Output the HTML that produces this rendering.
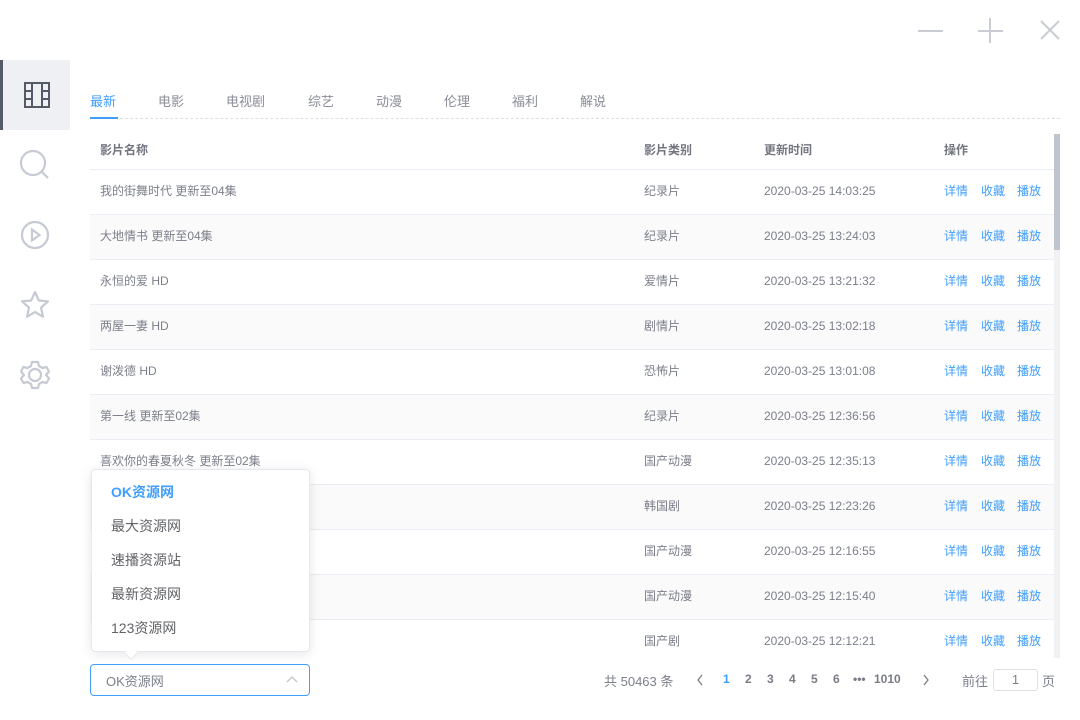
<!DOCTYPE html>
<html><head><meta charset="utf-8"><style>
*{margin:0;padding:0;box-sizing:border-box}
body{width:1080px;height:720px;background:#fff;font-family:"Liberation Sans","Noto Sans CJK SC",sans-serif;position:relative;overflow:hidden;color:#7b7f8a;font-size:12px}
.abs{position:absolute}
.tabs span{position:absolute;top:91px;font-size:13px;color:#8a8d96}
.row{position:absolute;left:90px;width:964px;height:45px;border-bottom:1px solid #ebeef5}
.row span{position:absolute;top:14px;font-size:12px;line-height:15px;white-space:nowrap}
.row .a{color:#409eff}
.g{background:#fafafa}
.pg span{position:absolute;top:672px;font-size:12px;font-weight:bold;color:#7a7d86}
</style></head><body>
<div class="abs" style="left:918px;top:30px;width:25px;height:2px;background:#c9ccd3"></div>
<div class="abs" style="left:978px;top:30px;width:25px;height:2px;background:#c9ccd3"></div>
<div class="abs" style="left:989px;top:18px;width:2px;height:25px;background:#c9ccd3"></div>
<svg class="abs" style="left:1040px;top:20px" width="20" height="20"><path d="M1 1L19 19M19 1L1 19" stroke="#c9ccd3" stroke-width="2"/></svg>
<div class="abs" style="left:0;top:60px;width:70px;height:70px;background:#eff0f3"></div>
<div class="abs" style="left:0;top:60px;width:3px;height:70px;background:#555b66"></div>
<svg class="abs" style="left:24px;top:82px" width="26" height="26"><rect x="1" y="1" width="24" height="24" fill="none" stroke="#555b66" stroke-width="2"/><path d="M8 1V25M18 1V25M1 9H8M1 17H8M18 9H25M18 17H25" stroke="#555b66" stroke-width="2"/></svg>
<svg class="abs" style="left:18px;top:148px" width="34" height="34" fill="none" stroke="#c5cad3" stroke-width="2.2"><circle cx="15" cy="15" r="12"/><path d="M24 24L30 30"/></svg>
<svg class="abs" style="left:20px;top:220px" width="30" height="30" fill="none" stroke="#c5cad3" stroke-width="2.2"><circle cx="15" cy="15" r="13"/><path d="M12 9.5L19.5 15L12 20.5Z"/></svg>
<svg class="abs" style="left:20px;top:290px" width="30" height="30" fill="none" stroke="#c5cad3" stroke-width="2.2" stroke-linejoin="round"><path d="M15 2L18.8 10.5L28 11.4L21 17.6L23 26.8L15 22L7 26.8L9 17.6L2 11.4L11.2 10.5Z"/></svg>
<svg class="abs" style="left:20px;top:360px" width="30" height="30" fill="none" stroke="#c5cad3" stroke-width="2.2" stroke-linejoin="round"><path d="M12 2H18L19 6L22.5 8L26.5 7L29 11.5L26 15L29 18.5L26.5 23L22.5 22L19 24L18 28H12L11 24L7.5 22L3.5 23L1 18.5L4 15L1 11.5L3.5 7L7.5 8L11 6Z"/><circle cx="15" cy="15" r="6"/></svg>
<div class="tabs">
<span style="left:90px;color:#409eff">最新</span><span style="left:158px">电影</span><span style="left:226px">电视剧</span><span style="left:308px">综艺</span><span style="left:376px">动漫</span><span style="left:444px">伦理</span><span style="left:512px">福利</span><span style="left:580px">解说</span>
</div>
<div class="abs" style="left:90px;top:118px;width:970px;border-top:1px dashed #dcdfe6"></div>
<div class="abs" style="left:90px;top:117px;width:28px;height:2px;background:#409eff"></div>
<div style="position:absolute;left:0;top:0;width:1080px;height:658px;overflow:hidden">
<div class="row" style="top:130px;height:40px"><span style="left:10px;top:13px;font-weight:bold;color:#727580">影片名称</span><span style="left:554px;top:13px;font-weight:bold;color:#727580">影片类别</span><span style="left:674px;top:13px;font-weight:bold;color:#727580">更新时间</span><span style="left:854px;top:13px;font-weight:bold;color:#727580">操作</span></div>
<div class="row" style="top:170px"><span style="left:10px">我的街舞时代 更新至04集</span><span style="left:554px">纪录片</span><span style="left:674px">2020-03-25 14:03:25</span><span class="a" style="left:854px">详情</span><span class="a" style="left:891px">收藏</span><span class="a" style="left:927px">播放</span></div>
<div class="row g" style="top:215px"><span style="left:10px">大地情书 更新至04集</span><span style="left:554px">纪录片</span><span style="left:674px">2020-03-25 13:24:03</span><span class="a" style="left:854px">详情</span><span class="a" style="left:891px">收藏</span><span class="a" style="left:927px">播放</span></div>
<div class="row" style="top:260px"><span style="left:10px">永恒的爱 HD</span><span style="left:554px">爱情片</span><span style="left:674px">2020-03-25 13:21:32</span><span class="a" style="left:854px">详情</span><span class="a" style="left:891px">收藏</span><span class="a" style="left:927px">播放</span></div>
<div class="row g" style="top:305px"><span style="left:10px">两屋一妻 HD</span><span style="left:554px">剧情片</span><span style="left:674px">2020-03-25 13:02:18</span><span class="a" style="left:854px">详情</span><span class="a" style="left:891px">收藏</span><span class="a" style="left:927px">播放</span></div>
<div class="row" style="top:350px"><span style="left:10px">谢泼德 HD</span><span style="left:554px">恐怖片</span><span style="left:674px">2020-03-25 13:01:08</span><span class="a" style="left:854px">详情</span><span class="a" style="left:891px">收藏</span><span class="a" style="left:927px">播放</span></div>
<div class="row g" style="top:395px"><span style="left:10px">第一线 更新至02集</span><span style="left:554px">纪录片</span><span style="left:674px">2020-03-25 12:36:56</span><span class="a" style="left:854px">详情</span><span class="a" style="left:891px">收藏</span><span class="a" style="left:927px">播放</span></div>
<div class="row" style="top:440px"><span style="left:10px">喜欢你的春夏秋冬 更新至02集</span><span style="left:554px">国产动漫</span><span style="left:674px">2020-03-25 12:35:13</span><span class="a" style="left:854px">详情</span><span class="a" style="left:891px">收藏</span><span class="a" style="left:927px">播放</span></div>
<div class="row g" style="top:485px"><span style="left:554px">韩国剧</span><span style="left:674px">2020-03-25 12:23:26</span><span class="a" style="left:854px">详情</span><span class="a" style="left:891px">收藏</span><span class="a" style="left:927px">播放</span></div>
<div class="row" style="top:530px"><span style="left:554px">国产动漫</span><span style="left:674px">2020-03-25 12:16:55</span><span class="a" style="left:854px">详情</span><span class="a" style="left:891px">收藏</span><span class="a" style="left:927px">播放</span></div>
<div class="row g" style="top:575px"><span style="left:554px">国产动漫</span><span style="left:674px">2020-03-25 12:15:40</span><span class="a" style="left:854px">详情</span><span class="a" style="left:891px">收藏</span><span class="a" style="left:927px">播放</span></div>
<div class="row" style="top:620px"><span style="left:554px">国产剧</span><span style="left:674px">2020-03-25 12:12:21</span><span class="a" style="left:854px">详情</span><span class="a" style="left:891px">收藏</span><span class="a" style="left:927px">播放</span></div>
</div>
<div class="abs" style="left:1054px;top:134px;width:6px;height:116px;background:#c0c4cc"></div>
<div class="abs" style="left:1054px;top:250px;width:6px;height:408px;background:#f0f1f3"></div>
<div class="abs" style="left:91px;top:469px;width:219px;height:183px;background:#fff;border:1px solid #e4e7ed;border-radius:4px;box-shadow:0 2px 12px rgba(0,0,0,.1)"></div>
<div class="abs" style="left:126px;top:648px;width:10px;height:10px;background:#fff;border-right:1px solid #e4e7ed;border-bottom:1px solid #e4e7ed;transform:rotate(45deg)"></div>
<div class="abs" style="left:111px;top:482px;font-size:14px;font-weight:bold;color:#409eff">OK资源网</div>
<div class="abs" style="left:111px;top:516px;font-size:14px;color:#606266">最大资源网</div>
<div class="abs" style="left:111px;top:550px;font-size:14px;color:#606266">速播资源站</div>
<div class="abs" style="left:111px;top:584px;font-size:14px;color:#606266">最新资源网</div>
<div class="abs" style="left:111px;top:618px;font-size:14px;color:#606266">123资源网</div>
<div class="abs" style="left:90px;top:664px;width:220px;height:32px;border:1px solid #409eff;border-radius:4px"></div>
<div class="abs" style="left:106px;top:671px;font-size:13px;color:#7b7f8a">OK资源网</div>
<svg class="abs" style="left:286px;top:675px" width="12" height="10"><path d="M1 7L6 2L11 7" fill="none" stroke="#c0c4cc" stroke-width="1.3"/></svg>
<div class="abs" style="left:604px;top:671px;font-size:13px;color:#7b7f8a">共 50463 条</div>
<svg class="abs" style="left:695px;top:674px" width="10" height="12"><path d="M7 1L3 6L7 11" fill="none" stroke="#7a7d86" stroke-width="1.3"/></svg>
<div class="pg"><span style="left:723px;color:#409eff">1</span><span style="left:745px">2</span><span style="left:767px">3</span><span style="left:789px">4</span><span style="left:811px">5</span><span style="left:833px">6</span><span style="left:853px">•••</span><span style="left:874px">1010</span></div>
<svg class="abs" style="left:921px;top:674px" width="10" height="12"><path d="M3 1L7 6L3 11" fill="none" stroke="#7a7d86" stroke-width="1.3"/></svg>
<div class="abs" style="left:962px;top:671px;font-size:13px;color:#7b7f8a">前往</div>
<div class="abs" style="left:993px;top:669px;width:45px;height:22px;border:1px solid #dcdfe6;border-radius:3px;text-align:center;font-size:13px;line-height:20px;color:#7b7f8a">1</div>
<div class="abs" style="left:1042px;top:671px;font-size:13px;color:#7b7f8a">页</div>
</body></html>
